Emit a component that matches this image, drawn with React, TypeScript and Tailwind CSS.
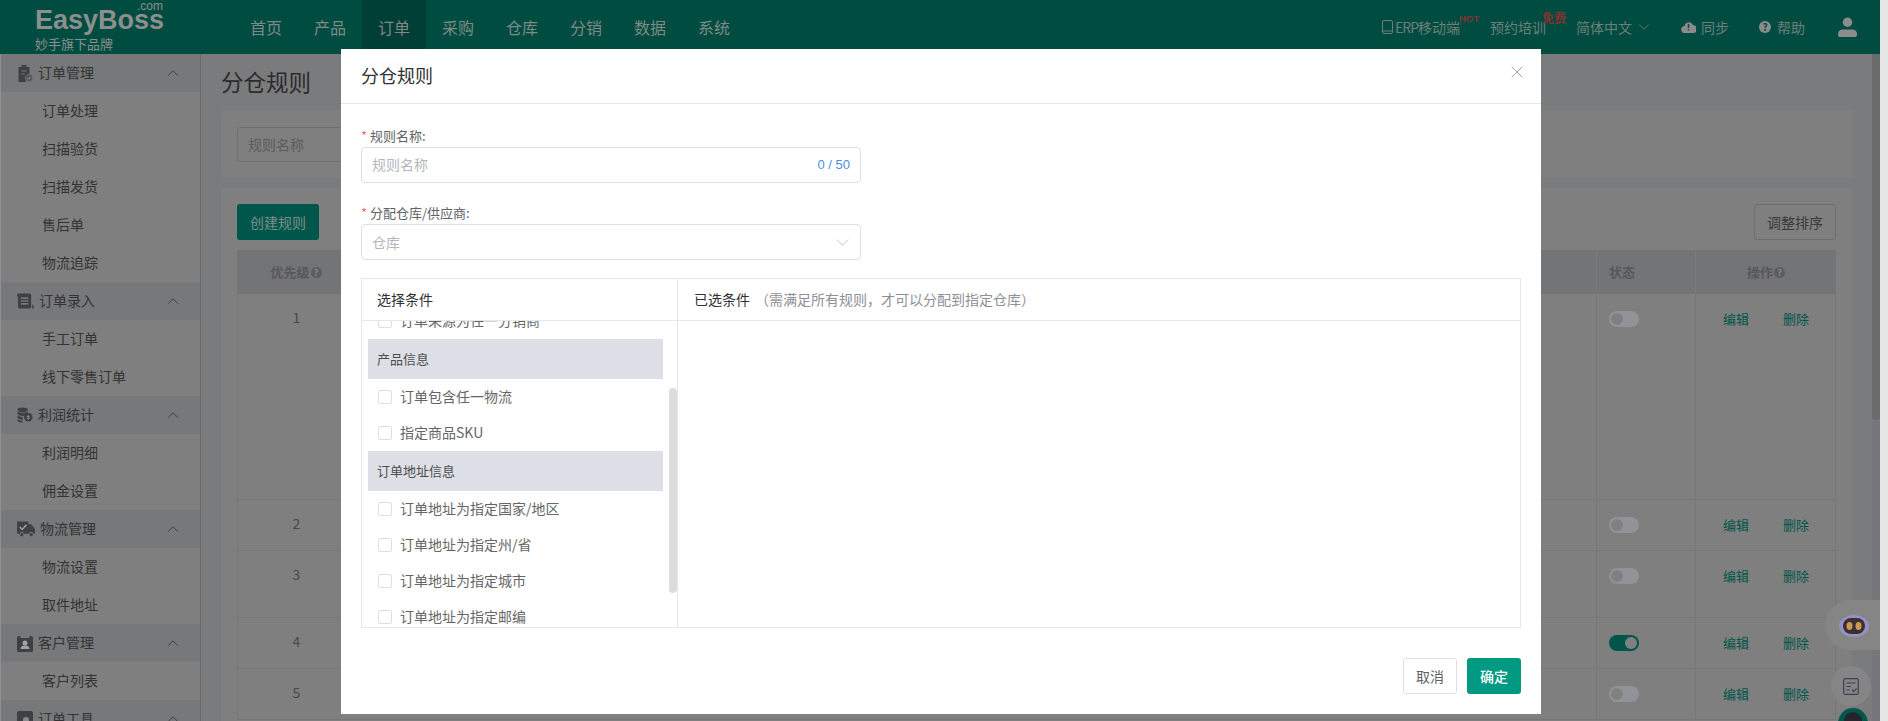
import React from "react";
import { ChevronUp, ChevronDown, X } from "lucide-react";

const font = "[font-family:'Noto_Sans_CJK_SC','Liberation_Sans',sans-serif]";

const Clip = () => (
  <svg width="16" height="17" viewBox="0 0 15 17" className="shrink-0"><path d="M1 2h3V0h5v2h3v7a4 4 0 0 0-4 6l.5 2H1z" fill="#3f4042"/><path d="M4 6h5M4 9h3" stroke="#7a7a7a" strokeWidth="1.2"/><circle cx="11.5" cy="13" r="3.4" fill="#55585a"/><path d="M9.8 13l1.2 1.2 2-2" stroke="#9a9a9a" strokeWidth="1" fill="none"/></svg>
);
const Scroll = () => (
  <svg width="17" height="16" viewBox="0 0 18 16" className="shrink-0"><path d="M2 0h11a2 2 0 0 1 2 2v12a2 2 0 0 1-2 2H3a2 2 0 0 1-2-2V3H0V2a2 2 0 0 1 2-2z" fill="#3f4042"/><path d="M4 5h8M4 8h8M4 11h8" stroke="#8a8a8a" strokeWidth="1.2"/><rect x="16" y="12" width="1.5" height="4" fill="#3f4042"/></svg>
);
const Coins = () => (
  <svg width="16" height="16" viewBox="0 0 17 16" className="shrink-0"><ellipse cx="6" cy="2.5" rx="5.5" ry="2.5" fill="#3f4042"/><path d="M.5 4v2.5c0 1.4 2.5 2.5 5.5 2.5s5.5-1.1 5.5-2.5V4c-1 1-3 1.6-5.5 1.6S1.500 5 .5 4zM.5 8v2.500c0 1.400 2.500 2.500 5.500 2.500V10c-3 0-4.500-1-5.500-2zM.5 12v1.500C.5 14.900 3 16 6 16v-2c-3 0-4.500-1-5.500-2z" fill="#3f4042"/><circle cx="12" cy="10.500" r="4.500" fill="#3f4042"/><path d="M12 8v5M10.500 9.500h3M10.500 11.500h3" stroke="#8a8a8a"/></svg>
);
const Truck = () => (
  <svg width="18" height="16" viewBox="0 0 19 16" className="shrink-0"><path d="M0 0h12v3h3l4 5v5h-2a2 2 0 0 0-4 0H7a2 2 0 0 0-4 0H0z" fill="#3f4042"/><circle cx="5" cy="14" r="1.700" fill="#3f4042"/><circle cx="15" cy="14" r="1.700" fill="#3f4042"/><path d="M3 6l2.500 2.500L10 3.500" stroke="#a3a3a3" strokeWidth="1.500" fill="none"/></svg>
);
const Badge = () => (
  <svg width="16" height="17" viewBox="0 0 16 17" className="shrink-0"><rect y="1" width="16" height="16" rx="1.500" fill="#3f4042"/><rect x="3.500" y="0" width="9" height="3" fill="#7a7a7a"/><circle cx="8" cy="8" r="2.500" fill="#a3a3a3"/><path d="M3.500 14c0-2.500 2-3.500 4.500-3.500s4.500 1 4.500 3.500z" fill="#a3a3a3"/></svg>
);
const Tool = () => (
  <svg width="16" height="16" viewBox="0 0 16 16" className="shrink-0"><rect width="16" height="16" rx="2" fill="#3f4042"/><circle cx="9" cy="9" r="3" fill="#8a8a8a"/></svg>
);

const menu: [React.ReactNode, string, string[]][] = [
  [<Clip />, "订单管理", ["订单处理", "扫描验货", "扫描发货", "售后单", "物流追踪"]],
  [<Scroll />, "订单录入", ["手工订单", "线下零售订单"]],
  [<Coins />, "利润统计", ["利润明细", "佣金设置"]],
  [<Truck />, "物流管理", ["物流设置", "取件地址"]],
  [<Badge />, "客户管理", ["客户列表"]],
  [<Tool />, "订单工具", []],
];

const Help = ({ className = "" }: { className?: string }) => (
  <span className={`inline-flex w-[11px] h-[11px] rounded-full bg-[#5b5d60] text-[#8a8a8a] text-[9px] font-bold items-center justify-center leading-none ${className}`}>?</span>
);

const Toggle = ({ on = false }: { on?: boolean }) => (
  <div className={`w-[30px] h-4 rounded-full flex items-center px-[2px] ${on ? "bg-[#00564a] justify-end" : "bg-[#929398] justify-start"}`}>
    <div className="w-3 h-3 rounded-full bg-[#808080]" />
  </div>
);

const rows: [string, number, boolean][] = [
  ["1", 206, false],
  ["2", 51, false],
  ["3", 67, false],
  ["4", 51, true],
  ["5", 51, false],
];

const Check = ({ label }: { label: string }) => (
  <div className="flex items-center h-9 pl-[10px] text-[14px] text-[#666] shrink-0">
    <span className="w-[14px] h-[14px] rounded-[2px] border border-[#dcdfe6] bg-white mr-2 shrink-0" />
    <span className="pb-[2px]">{label}</span>
  </div>
);

const Group = ({ label }: { label: string }) => (
  <div className="h-10 bg-[#dcdfe6] flex items-center pl-[9px] text-[13px] text-[#4d4d4d] shrink-0">{label}</div>
);

export default function App() {
  return (
    <div className={`relative w-[1888px] h-[721px] overflow-hidden bg-[#e6e6e6] ${font}`}>
      <div className="w-[1880px] h-full flex flex-col bg-[#7a7b7d]">
        <header className="h-[54px] shrink-0 bg-[#004c41] flex items-center text-[#7f8a86]">
          <div className="w-[234px] shrink-0 pl-[35px] h-full flex flex-col relative text-[#8c8f8d]">
            <span className="absolute left-[137px] top-[3px] text-[12px] leading-[7px] [font-family:'Liberation_Sans',sans-serif]">.com</span>
            <span className="text-[27px] leading-[20px] font-bold mt-[10px] [font-family:'Liberation_Sans',sans-serif]">EasyBoss</span>
            <span className="text-[13px] leading-[14px] mt-[7px]">妙手旗下品牌</span>
          </div>
          <nav className="flex text-[16px] h-full items-center">
            {["首页", "产品", "订单", "采购", "仓库", "分销", "数据", "系统"].map((t) => (
              <span key={t} className={`w-16 h-full flex items-center justify-center ${t === "订单" ? "bg-[#003f36]" : ""}`}>{t}</span>
            ))}
          </nav>
          <div className="ml-auto flex items-center text-[14px] text-[#6e7f7a] h-full pr-[23px]">
            <svg width="11" height="14" viewBox="0 0 11 14" fill="none" stroke="#6e7f7a" className="mr-[2px]"><rect x=".5" y=".5" width="10" height="13" rx="1.500"/><path d="M.5 11h10"/></svg>
            <span className="relative mr-[30px]"><span className="tracking-[-1px]">ERP</span>移动端<span className="absolute -right-[19px] -top-[4px] text-[9.500px] font-bold text-[#85322f] leading-3 [font-family:'Liberation_Sans',sans-serif]">HOT</span></span>
            <span className="relative mr-[30px]">预约培训<span className="absolute -right-[20px] -top-[7px] text-[12px] font-bold text-[#85322f] leading-4">免费</span></span>
            <span className="mr-[28px] flex items-center">简体中文<ChevronDown size={18} strokeWidth={1.100} className="ml-[3px]" /></span>
            <svg width="15" height="12" viewBox="0 0 15 12" className="mr-[5px]"><path d="M4 12a3.500 3.500 0 0 1-.5-7A4.500 4.500 0 0 1 12 4a4 4 0 0 1-.500 8z" fill="#8c8c8c"/><path d="M7.500 3v4M7.500 8.200v1.200" stroke="#004c41" strokeWidth="1.500"/></svg>
            <span className="mr-[30px]">同步</span>
            <span className="mr-[6px] flex"><span className="inline-flex w-[12px] h-[12px] rounded-full bg-[#8c8c8c] text-[#004c41] text-[10px] font-bold items-center justify-center leading-none">?</span></span>
            <span className="mr-[33px]">帮助</span>
            <svg width="19" height="20" viewBox="0 0 20 21"><circle cx="10" cy="5.500" r="5" fill="#8c8c8c"/><path d="M0 18c0-4 3-5 5-5h10c2 0 5 1 5 5 0 2-1 3-2 3H2c-1 0-2-1-2-3z" fill="#8c8c8c"/></svg>
          </div>
        </header>
        <div className="flex flex-1 min-h-0">
          <aside className="w-[201px] shrink-0 border-l border-r border-l-[#8f8f98] border-r-[#696a6c] bg-[#7f7f7f] overflow-hidden">
            {menu.map(([icon, title, items]) => (
              <div key={title}>
                <div className="h-[38px] bg-[#76787a] flex items-center gap-[5px] text-[14px] text-[#333] pl-[16px] pr-[18px]">
                  {icon}
                  <span className="pb-[2px]">{title}</span>
                  <ChevronUp size={18} strokeWidth={1.100} className="ml-auto text-[#333]" />
                </div>
                {items.map((i) => (
                  <div key={i} className="h-[38px] flex items-center pl-[41px] pb-[2px] text-[14px] text-[#333]">{i}</div>
                ))}
              </div>
            ))}
          </aside>
          <main className="flex-1 min-w-0 pl-[20px] pr-[28px] relative">
            <h1 className="text-[22.500px] leading-7 text-[#2b2b2b] mt-[13px]">分仓规则</h1>
            <div className="h-[68px] bg-[#7f7f7f] mt-[15px] rounded-[3px] pl-4 pt-[17px] text-[14px] text-[#5c5c5c]">
              <div className="w-[120px] h-[35px] border border-[#6c6d6f] rounded-[3px] flex items-center pl-[10px]">规则名称</div>
            </div>
            <div className="bg-[#7f7f7f] mt-[10px] rounded-[3px] px-4 pt-4 h-[600px]">
              <div className="flex justify-between">
                <div className="w-[82px] h-9 bg-[#00564a] rounded-[3px] flex items-center justify-center text-[14px] text-[#7f8e89]">创建规则</div>
                <div className="w-[82px] h-9 border border-[#6c6d6f] rounded-[3px] flex items-center justify-center text-[14px] text-[#3a3a3a]">调整排序</div>
              </div>
              <div className="mt-[10px] h-11 bg-[#737476] flex text-[13px] font-bold text-[#57585a] items-center">
                <div className="w-[118px] flex items-center justify-center gap-[1px]">优先级<Help /></div>
                <div className="flex-1" />
                <div className="w-[99px] pl-[12px] h-full flex items-center border-l border-[#7b7b7d]">状态</div>
                <div className="w-[141px] h-full flex items-center justify-center gap-[1px] border-l border-[#7b7b7d]">操作<Help /></div>
              </div>
              {rows.map(([n, h, on]) => (
                <div key={n} style={{ height: h }} className="flex border-b border-[#76777c] text-[14px] leading-5 text-[#484848]">
                  <div className="w-[118px] flex justify-center pt-[13px] border-l border-[#76777c]">{n}</div>
                  <div className="flex-1" />
                  <div className="w-[99px] pl-[12px] pt-[17px] border-l border-[#76777c]"><Toggle on={on} /></div>
                  <div className="w-[141px] flex pt-[15px] pl-[27px] gap-[34px] text-[13px] text-[#00564a] border-l border-r border-[#76777c]"><span>编辑</span><span>删除</span></div>
                </div>
              ))}
            </div>
          </main>
          <div className="w-2 shrink-0 -ml-2 relative z-0 bg-[#76777a]">
            <div className="h-[366px] rounded-b bg-[#6a6b6d]" />
          </div>
        </div>
      </div>

      {/* floating helpers */}
      <div className="absolute right-2 top-[600px] w-[55px] h-[50px] rounded-l-full bg-[#858585] flex items-center pl-[14px]">
        <svg width="30" height="26" viewBox="0 0 30 26"><path d="M6 4l2 3M24 4l-2 3" stroke="#7673b8" strokeWidth="2"/><ellipse cx="15" cy="14" rx="15" ry="11" fill="#9592c4"/><rect x="4" y="6" width="22" height="16" rx="8" fill="#3d2f33"/><ellipse cx="10.500" cy="14" rx="3" ry="4" fill="#c99a52"/><ellipse cx="19.500" cy="14" rx="3" ry="4" fill="#c99a52"/></svg>
      </div>
      <div className="absolute left-[1831px] top-[666px] w-10 h-10 rounded-full bg-[#858585] flex items-center justify-center">
        <svg width="16" height="17" viewBox="0 0 16 17" fill="none" stroke="#3f4150" strokeWidth="1.200"><rect x=".7" y=".7" width="14.600" height="15.600" rx="1.500"/><path d="M3.500 5h9M3.500 8.500h4.500M3.500 12h3M9 11.500l1.800 1.800 3-3"/></svg>
      </div>
      <div className="absolute left-[1838px] top-[708px] w-[30px] h-[30px] rounded-full bg-[#00564a] flex justify-center pt-1">
        <span className="w-[18px] h-[18px] rounded-full bg-[#26242f]" />
      </div>

      {/* modal */}
      <div className="absolute left-[341px] top-[49px] w-[1200px] h-[665px] bg-white flex flex-col text-[#606266]">
        <div className="h-[55px] shrink-0 border-b border-[#e4e7ed] flex items-center pl-[20px] pr-[14px] justify-between">
          <span className="text-[18px] text-[#303133] pb-[2px]">分仓规则</span>
          <X size={20} strokeWidth={1} className="text-[#8f9298] -mt-[9px]" />
        </div>
        <div className="pl-[20px] pr-[20px] pt-[24px] flex-1 flex flex-col">
          <label className="h-4 leading-4 text-[13px] flex"><span className="text-[#f56c6c] w-[9px]">*</span>规则名称:</label>
          <div className="mt-[3px] w-[500px] h-9 rounded border border-[#dcdfe6] flex items-center justify-between pl-[10px] pr-[10px] text-[14px] text-[#b3b6bd]">
            <span className="pb-[2px]">规则名称</span>
            <span className="text-[13px] text-[#4a90e2] [font-family:'Liberation_Sans',sans-serif]">0 / 50</span>
          </div>
          <label className="h-4 leading-4 text-[13px] flex mt-[22px]"><span className="text-[#f56c6c] w-[9px]">*</span>分配仓库/供应商:</label>
          <div className="mt-[3px] w-[500px] h-9 rounded border border-[#dcdfe6] flex items-center justify-between pl-[10px] pr-[7px] text-[14px] text-[#b3b6bd]">
            <span>仓库</span>
            <ChevronDown size={21} strokeWidth={1} className="text-[#b3b6bd]" />
          </div>
          <div className="mt-[18px] border border-[#e4e7ed] h-[350px] flex text-[14px]">
            <div className="w-[316px] shrink-0 border-r border-[#e4e7ed] flex flex-col min-h-0">
              <div className="h-[42px] shrink-0 border-b border-[#e4e7ed] flex items-center pl-[15px] text-[#303133]">选择条件</div>
              <div className="flex-1 min-h-0 relative overflow-hidden pl-[6px] pr-[14px]">
                <div className="-mt-[18px] flex flex-col">
                  <Check label="订单来源为任一分销商" />
                  <Group label="产品信息" />
                  <Check label="订单包含任一物流" />
                  <Check label="指定商品SKU" />
                  <Group label="订单地址信息" />
                  <Check label="订单地址为指定国家/地区" />
                  <Check label="订单地址为指定州/省" />
                  <Check label="订单地址为指定城市" />
                  <Check label="订单地址为指定邮编" />
                </div>
                <div className="absolute right-0 top-[67px] w-2 h-[205px] rounded-full bg-[#dcdcdc]" />
              </div>
            </div>
            <div className="flex-1 min-w-0 flex flex-col">
              <div className="h-[42px] shrink-0 border-b border-[#e4e7ed] flex items-center pl-[16px] text-[#303133]">
                已选条件<span className="text-[#8e9096] ml-[5px]">（需满足所有规则，才可以分配到指定仓库）</span>
              </div>
            </div>
          </div>
          <div className="flex justify-end gap-[10px] mt-[30px]">
            <div className="w-[54px] h-9 rounded-[3px] border border-[#dcdfe6] flex items-center justify-center text-[14px]">取消</div>
            <div className="w-[54px] h-9 rounded-[3px] bg-[#009a82] flex items-center justify-center text-[14px] font-medium text-white">确定</div>
          </div>
        </div>
      </div>
    </div>
  );
}
